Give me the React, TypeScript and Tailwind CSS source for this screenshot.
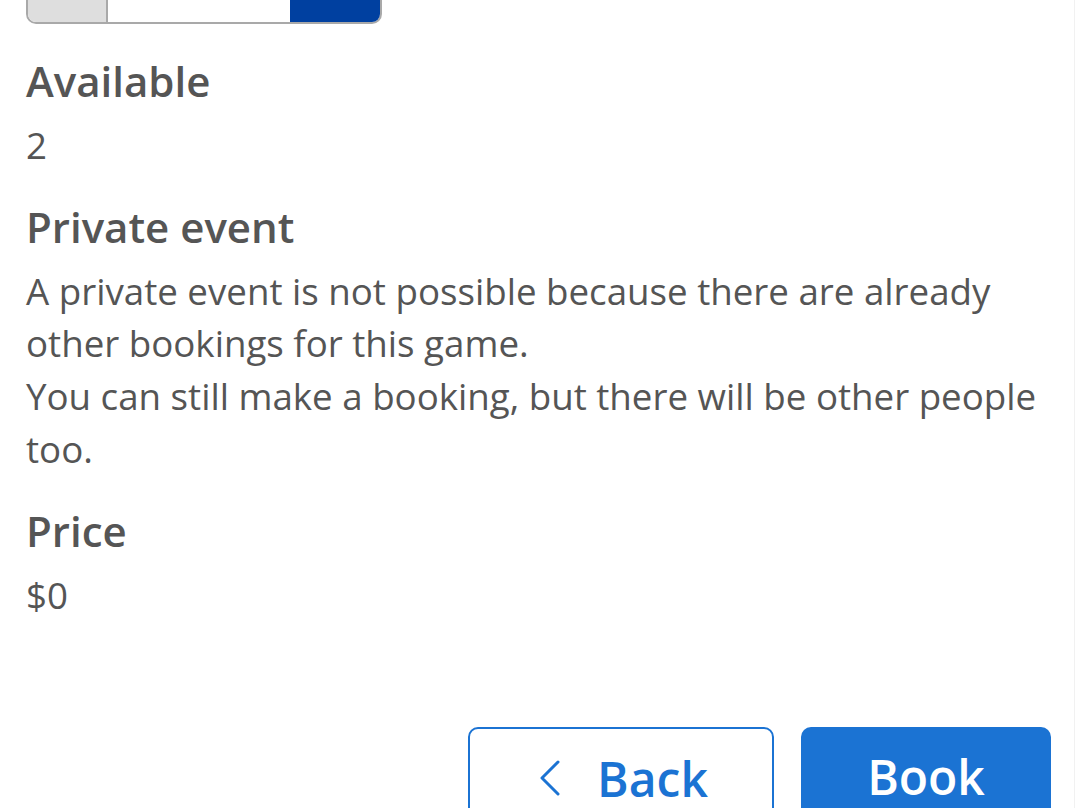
import * as React from "react";

function Section({ title, children }: { title: string; children: React.ReactNode }) {
  return (
    <section className="flex flex-col gap-[14px]">
      <h2 className="text-[42px] leading-[48px] font-semibold text-[#555555]">{title}</h2>
      <div className="text-[36.7px] leading-[52.7px] text-[#555555]">{children}</div>
    </section>
  );
}

export default function App() {
  return (
    <div
      className="h-[808px] w-[1080px] overflow-hidden bg-white"
      style={{ fontFamily: '"Open Sans", "Noto Sans", sans-serif' }}
    >
      <div className="mt-[-60px] w-[1075px] border-r border-[#f1f1f1] pl-[26px] pr-[23px]">
        {/* quantity stepper, scrolled mostly out of view */}
        <div className="flex h-[84px] w-[356px] overflow-hidden rounded-[10px] border-2 border-[#a9a9a9]">
          <div className="w-[80px] border-r-2 border-[#a9a9a9] bg-[#dedede]" />
          <div className="flex-1 bg-white" />
          <div className="w-[90px] bg-[#0040a0]" />
        </div>

        <div className="mt-[33px] flex flex-col gap-[31px]">
          <Section title="Available">2</Section>
          <Section title="Private event">
            <p>A private event is not possible because there are already other bookings for this game.</p>
            <p>You can still make a booking, but there will be other people too.</p>
          </Section>
          <Section title="Price">$0</Section>
        </div>

        <div className="mt-[106px] flex justify-end gap-[27px]">
          <button className="flex h-[110px] w-[306px] items-start justify-center gap-[37px] rounded-[10px] border-2 border-[#1b73d3] bg-white pl-[6px] pt-[20px] text-[48px] font-semibold leading-[60px] text-[#1b73d3]">
            <svg
              viewBox="0 0 20 36"
              className="mt-[11px] h-[36px] w-[20px]"
              fill="none"
              stroke="currentColor"
              strokeWidth={3}
              strokeLinecap="round"
              strokeLinejoin="round"
            >
              <path d="M18 2 L2 18 L18 34" />
            </svg>
            Back
          </button>
          <button className="flex h-[110px] w-[250px] items-start justify-center rounded-[10px] bg-[#1b73d3] pt-[20px] text-[48px] font-semibold leading-[60px] text-white">
            Book
          </button>
        </div>
      </div>
    </div>
  );
}
